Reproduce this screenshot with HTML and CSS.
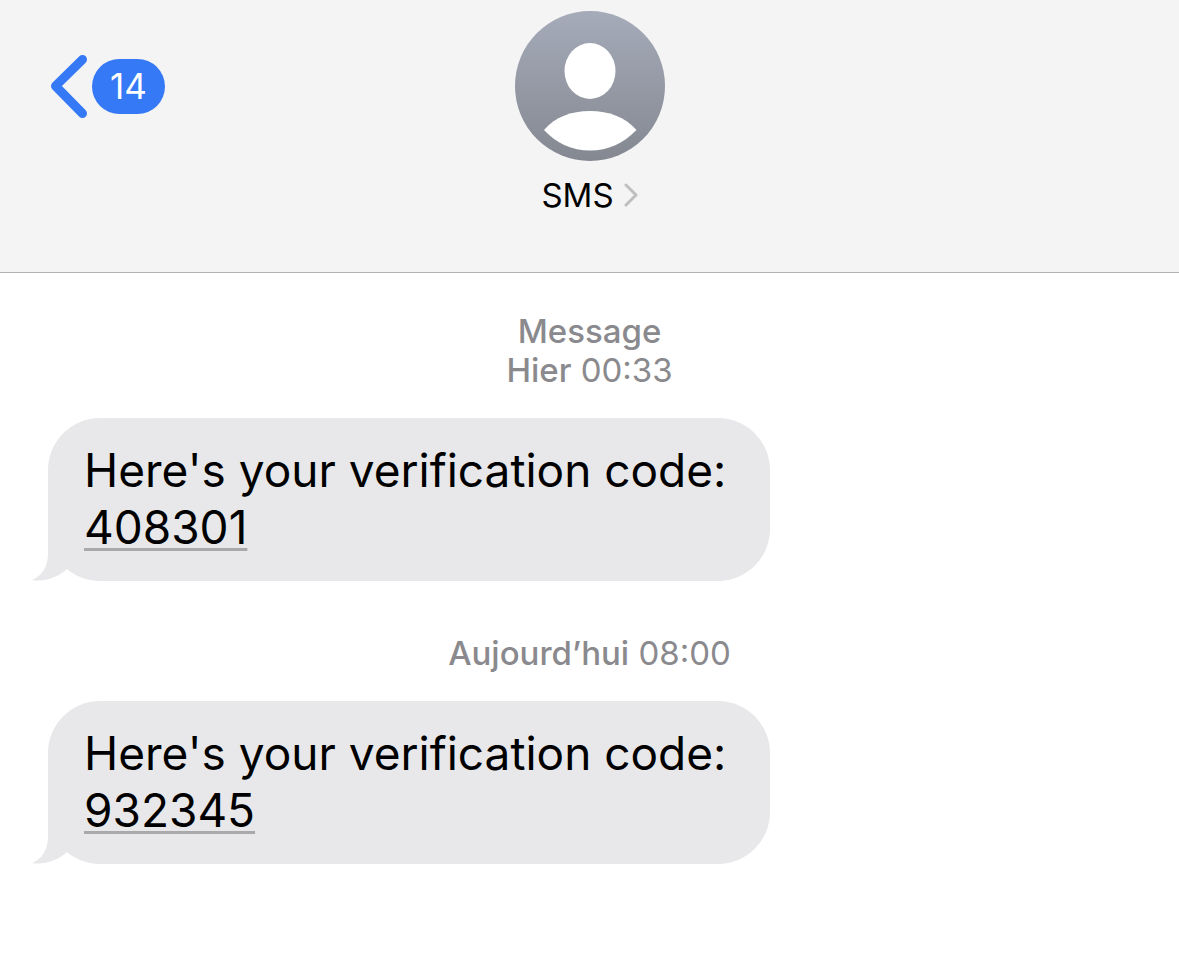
FILE: index.html
```
<!DOCTYPE html>
<html lang="fr">
<head>
  <meta charset="UTF-8" />
  <meta name="viewport" content="width=device-width, initial-scale=1.0"/>
  <title>SMS</title>
  <link rel="stylesheet" href="styles.css">
</head>
<body>
  <header class="header">
    <button class="back" type="button">
      <svg class="back-icon" viewBox="0 0 38 64" aria-hidden="true">
        <path d="M32.500 5.500L5.500 32L32.500 59.500" />
      </svg>
      <span class="badge">14</span>
    </button>

    <button class="contact" type="button">
      <svg class="avatar" viewBox="0 0 150 150" aria-hidden="true">
        <defs>
          <linearGradient id="avatarFill" x1="0" y1="0" x2="0" y2="1">
            <stop offset="0" stop-color="#a5abb9" />
            <stop offset="1" stop-color="#848891" />
          </linearGradient>
        </defs>
        <circle cx="75" cy="75" r="75" fill="url(#avatarFill)" />
        <ellipse cx="75" cy="60" rx="25.500" ry="28" fill="#fff" />
        <path d="M29 119C40 106 56 100 75 100S110 106 121.500 119C109 132 93 139.500 75 139.500S41 132 29 119Z" fill="#fff" />
      </svg>
      <span class="contact-name">
        SMS
        <svg class="chevron" viewBox="0 0 14 24" aria-hidden="true">
          <path d="M2 2L12 12L2 22" />
        </svg>
      </span>
    </button>
  </header>

  <main class="thread">
    <p class="stamp"><strong>Message</strong><br><strong>Hier</strong> 00:33</p>
    <div class="bubble">
      Here's your verification code:<br>
      <a class="code" href="#">408301</a>
      <svg class="tail" viewBox="0 0 38 56" aria-hidden="true">
        <path d="M16 0V28C16 42 10 51 0 55C12 57 25 53 35 44L38 0Z" />
      </svg>
    </div>

    <p class="stamp"><strong>Aujourd’hui</strong> 08:00</p>
    <div class="bubble">
      Here's your verification code:<br>
      <a class="code" href="#">932345</a>
      <svg class="tail" viewBox="0 0 38 56" aria-hidden="true">
        <path d="M16 0V28C16 42 10 51 0 55C12 57 25 53 35 44L38 0Z" />
      </svg>
    </div>
  </main>
</body>
</html>
```
FILE: styles.css
```
* {
  box-sizing: border-box;
}

body {
  margin: 0;
  font-family: Inter, "Liberation Sans", sans-serif;
  background: #fff;
  color: #000;
}

button {
  padding: 0;
  border: none;
  background: none;
  font: inherit;
  color: inherit;
  cursor: pointer;
}

.header {
  display: grid;
  grid-template-columns: 1fr auto 1fr;
  align-items: start;
  padding: 11px 50px 57px;
  background: #f4f4f4;
  border-bottom: 1px solid #b2b2b2;
}

.back {
  display: flex;
  align-items: center;
  justify-self: start;
  gap: 4px;
  height: 150px;
}

.back-icon {
  width: 38px;
  height: 64px;
  fill: none;
  stroke: #3579f6;
  stroke-width: 9;
  stroke-linecap: round;
  stroke-linejoin: round;
}

.badge {
  min-width: 73px;
  border-radius: 28px;
  background: #3579f6;
  color: #fff;
  font-size: 35px;
  line-height: 55px;
  text-align: center;
}

.contact {
  display: flex;
  flex-direction: column;
  align-items: center;
  gap: 14px;
}

.avatar {
  width: 150px;
  height: 150px;
}

.contact-name {
  display: flex;
  align-items: center;
  gap: 10px;
  font-size: 33px;
  line-height: 40px;
}

.chevron {
  width: 14px;
  height: 24px;
  fill: none;
  stroke: #bfbfc1;
  stroke-width: 3;
  stroke-linecap: round;
  stroke-linejoin: round;
}

.thread {
  padding: 39px 48px;
}

.stamp {
  margin: 0 0 28px;
  color: #8a8a8e;
  font-size: 33px;
  line-height: 39px;
  text-align: center;
}

.stamp strong {
  font-weight: 500;
}

.bubble {
  position: relative;
  width: fit-content;
  max-width: 100%;
  margin-bottom: 53px;
  padding: 24px 44px 25px 36px;
  border-radius: 52px;
  background: #e8e8ea;
  font-size: 46px;
  line-height: 57px;
}

.code {
  color: inherit;
  text-decoration: underline;
  text-decoration-color: #a9a9ab;
  text-decoration-thickness: 3px;
  text-decoration-skip-ink: none;
  text-underline-offset: 4px;
}

/* little hook at the bottom left of the bubble */
.tail {
  position: absolute;
  left: -16px;
  bottom: 0;
  width: 38px;
  height: 56px;
  fill: #e8e8ea;
}
```
